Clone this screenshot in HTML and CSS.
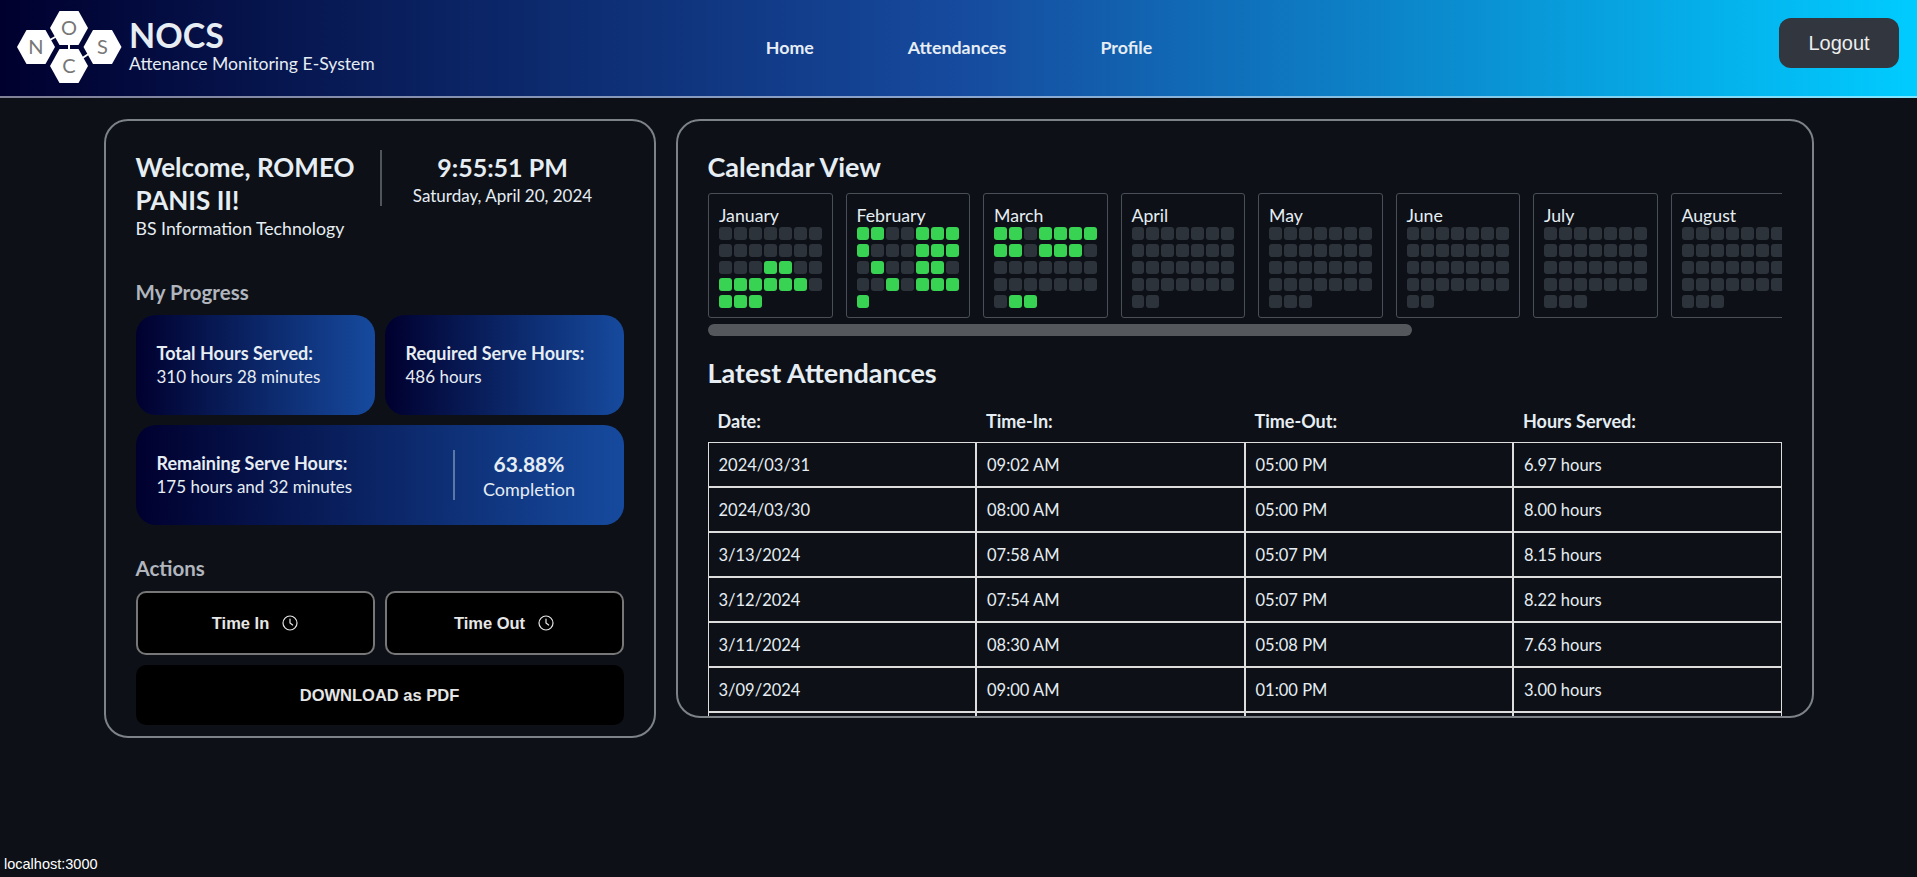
FILE: index.html
```html
<!DOCTYPE html>
<html lang="en">
<head>
    <meta charset="UTF-8">
    <title>NOCS</title>
    <link rel="stylesheet" href="styles.css">
</head>
<body>
    <header class="topbar">
        <div class="brand">
            <svg class="brand-logo" width="108" height="76" viewBox="16 10 108 76">
                <g stroke="#fff" stroke-width="2">
                    <line x1="48" y1="41" x2="57" y2="36"/>
                    <line x1="69" y1="44" x2="69" y2="50"/>
                    <line x1="81" y1="59" x2="90" y2="53"/>
                </g>
                <g fill="#fff">
                    <polygon points="17,47 26.5,30 45.5,30 55,47 45.5,64 26.5,64"/>
                    <polygon points="50,28 59.5,11 78.5,11 88,28 78.5,45 59.5,45"/>
                    <polygon points="83.5,47 93,30 112,30 121.5,47 112,64 93,64"/>
                    <polygon points="50,66 59.5,49 78.5,49 88,66 78.5,83 59.5,83"/>
                </g>
                <g class="logo-letters">
                    <text x="36" y="54">N</text>
                    <text x="69" y="35">O</text>
                    <text x="102.5" y="54">S</text>
                    <text x="69" y="73">C</text>
                </g>
            </svg>
            <div class="brand-text">
                <div class="brand-name">NOCS</div>
                <div class="brand-sub">Attenance Monitoring E-System</div>
            </div>
        </div>
        <nav class="nav">
            <a href="#">Home</a>
            <a href="#">Attendances</a>
            <a href="#">Profile</a>
        </nav>
        <div class="topbar-right">
            <button class="logout" type="button">Logout</button>
        </div>
    </header>

    <main class="page">
        <section class="card card-left">
            <div class="intro">
                <div class="intro-name">
                    <h1>Welcome, ROMEO PANIS II!</h1>
                    <p>BS Information Technology</p>
                </div>
                <div class="clock">
                    <div class="clock-time">9:55:51 PM</div>
                    <div class="clock-date">Saturday, April 20, 2024</div>
                </div>
            </div>

            <h3 class="section-title progress-title">My Progress</h3>
            <div class="stats">
                <div class="stat">
                    <strong>Total Hours Served:</strong>
                    <span>310 hours 28 minutes</span>
                </div>
                <div class="stat">
                    <strong>Required Serve Hours:</strong>
                    <span>486 hours</span>
                </div>
                <div class="stat stat-wide">
                    <div>
                        <strong>Remaining Serve Hours:</strong>
                        <span>175 hours and 32 minutes</span>
                    </div>
                    <div class="stat-percent">
                        <b>63.88%</b>
                        <span>Completion</span>
                    </div>
                </div>
            </div>

            <h3 class="section-title actions-title">Actions</h3>
            <div class="actions">
                <button class="btn" type="button">Time In
                    <svg width="16" height="16" viewBox="0 0 24 24" fill="none" stroke="currentColor" stroke-width="1.8" stroke-linecap="round" stroke-linejoin="round"><circle cx="12" cy="12" r="10.5"/><polyline points="12 6 12 12 16 15"/></svg>
                </button>
                <button class="btn" type="button">Time Out
                    <svg width="16" height="16" viewBox="0 0 24 24" fill="none" stroke="currentColor" stroke-width="1.8" stroke-linecap="round" stroke-linejoin="round"><circle cx="12" cy="12" r="10.5"/><polyline points="12 6 12 12 16 15"/></svg>
                </button>
                <button class="btn btn-pdf" type="button">DOWNLOAD as PDF</button>
            </div>
        </section>

        <section class="card card-right">
            <h2>Calendar View</h2>
            <div class="months" id="months"></div>
            <div class="months-thumb"></div>

            <h2 class="latest-title">Latest Attendances</h2>
            <div class="table-wrap">
                <table>
                    <thead>
                        <tr><th>Date:</th><th>Time-In:</th><th>Time-Out:</th><th>Hours Served:</th></tr>
                    </thead>
                    <tbody>
                        <tr><td>2024/03/31</td><td>09:02 AM</td><td>05:00 PM</td><td>6.97 hours</td></tr>
                        <tr><td>2024/03/30</td><td>08:00 AM</td><td>05:00 PM</td><td>8.00 hours</td></tr>
                        <tr><td>3/13/2024</td><td>07:58 AM</td><td>05:07 PM</td><td>8.15 hours</td></tr>
                        <tr><td>3/12/2024</td><td>07:54 AM</td><td>05:07 PM</td><td>8.22 hours</td></tr>
                        <tr><td>3/11/2024</td><td>08:30 AM</td><td>05:08 PM</td><td>7.63 hours</td></tr>
                        <tr><td>3/09/2024</td><td>09:00 AM</td><td>01:00 PM</td><td>3.00 hours</td></tr>
                        <tr><td>&nbsp;</td><td>&nbsp;</td><td>&nbsp;</td><td>&nbsp;</td></tr>
                    </tbody>
                </table>
            </div>
        </section>
    </main>

    <div class="status">localhost:3000</div>

    <script src="calendar.js"></script>
</body>
</html>
```

FILE: styles.css
```css
* {
    margin: 0;
    padding: 0;
    box-sizing: border-box;
}

body {
    font-family: 'Lato', 'Noto Sans', sans-serif;
    background-color: #0d1117;
    color: #e6edf3;
    height: 877px;
    overflow: hidden;
}

/* Top bar */
.topbar {
    height: 98px;
    display: grid;
    grid-template-columns: 1fr auto 1fr;
    align-items: center;
    padding: 0 18px 0 16px;
    background: linear-gradient(90deg, #00002e 0%, #164a9e 50%, #00ccff 100%);
    border-bottom: 2px solid rgba(255, 255, 255, 0.5);
}

.brand {
    display: flex;
    align-items: center;
    gap: 5px;
}

.brand-logo {
    display: block;
}

.logo-letters text {
    fill: #777;
    font-family: 'Lato', sans-serif;
    font-size: 20px;
    text-anchor: middle;
}

.brand-text {
    padding-bottom: 5px;
}

.brand-name {
    font-size: 34px;
    font-weight: 700;
    line-height: 34px;
    color: #e6edf3;
}

.brand-sub {
    margin-top: 2px;
    font-size: 17.6px;
    line-height: 20px;
    color: #e6edf3;
}

.nav {
    display: flex;
    gap: 94px;
    margin-bottom: 2px;
    margin-left: 3px;
}

.nav a {
    color: #e6edf3;
    font-size: 17.8px;
    font-weight: 700;
    text-decoration: none;
}

.topbar-right {
    display: flex;
    justify-content: flex-end;
}

.logout {
    width: 120px;
    height: 50px;
    margin-bottom: 10px;
    border: none;
    border-radius: 12px;
    background-color: #31363f;
    color: #eee;
    font-family: 'Liberation Sans', sans-serif;
    font-size: 20px;
}

/* Main layout */
.page {
    width: 1710px;
    margin: 21px auto 0;
    display: flex;
    align-items: flex-start;
    gap: 20px;
}

.card {
    border: 2px solid #7d8188;
    border-radius: 24px;
}

.card-left {
    width: 552px;
    height: 619px;
    flex-shrink: 0;
    padding: 30px 30px 10px;
}

.card-right {
    flex: 1;
    min-width: 0;
    height: 599px;
    padding: 30px 30px 0;
    overflow: hidden;
    display: flex;
    flex-direction: column;
}

/* Welcome block */
.intro {
    display: flex;
}

.intro-name {
    width: 244px;
    padding-right: 10px;
}

.intro h1 {
    font-size: 26px;
    line-height: 33px;
    font-weight: 700;
}

.intro p {
    font-size: 17.7px;
    line-height: 23px;
}

.clock {
    flex: 1;
    height: 56px;
    margin-top: -1px;
    padding-top: 1px;
    border-left: 2px solid #50545b;
    text-align: center;
}

.clock-time {
    font-size: 25px;
    line-height: 33px;
    font-weight: 700;
}

.clock-date {
    font-size: 17px;
    line-height: 24px;
}

.section-title {
    font-size: 20.5px;
    line-height: 24px;
    font-weight: 700;
    color: #b1b5be;
}

.progress-title {
    margin-top: 40px;
    margin-bottom: 11px;
}

.actions-title {
    margin-top: 31px;
    margin-bottom: 11px;
}

/* Progress cards */
.stats {
    display: grid;
    grid-template-columns: 1fr 1fr;
    gap: 10px;
}

.stat {
    height: 100px;
    padding: 0 20px 0 21px;
    border-radius: 20px;
    background: linear-gradient(90deg, #00002e 0%, #164a9e 100%);
    display: flex;
    flex-direction: column;
    justify-content: center;
    font-size: 17px;
    line-height: 23px;
}

.stat strong,
.stat span {
    display: block;
}

.stat strong {
    font-size: 18px;
}

.stat-wide {
    grid-column: 1 / 3;
    flex-direction: row;
    justify-content: space-between;
    align-items: center;
}

.stat-percent {
    width: 151px;
    height: 50px;
    border-left: 2px solid #5b76a8;
    text-align: center;
}

.stat-percent b {
    display: block;
    font-size: 21px;
    font-weight: 700;
    line-height: 28px;
}

.stat-percent span {
    font-size: 18px;
}

/* Buttons */
.actions {
    display: grid;
    grid-template-columns: 1fr 1fr;
    gap: 10px;
}

.btn {
    height: 64px;
    display: flex;
    align-items: center;
    justify-content: center;
    gap: 13px;
    background-color: #000;
    border: 2px solid #777;
    border-radius: 10px;
    color: #e6e6e6;
    font-family: 'Liberation Sans', sans-serif;
    font-size: 16.5px;
    font-weight: 700;
}

.btn-pdf {
    grid-column: 1 / 3;
    height: 60px;
    border: none;
}

/* Calendar */
.card-right h2 {
    font-size: 27px;
    line-height: 32px;
    font-weight: 700;
}

.months {
    display: flex;
    gap: 13px;
    margin-top: 10px;
    margin-left: 0.5px;
    overflow: hidden;
    flex-shrink: 0;
}

.months-thumb {
    width: 704px;
    height: 12px;
    flex-shrink: 0;
    margin-top: 6px;
    background-color: #54575b;
    border-radius: 6px;
}

.month {
    flex: 0 0 124.5px;
    height: 125px;
    padding: 10px;
    border: 1px solid #4a4f57;
    border-radius: 3px;
}

.month-name {
    font-size: 17.7px;
    line-height: 23px;
}

.month-days {
    display: grid;
    grid-template-columns: repeat(7, 1fr);
    gap: 4px 2px;
}

.day {
    height: 13px;
    border-radius: 3px;
    background-color: #2d333b;
}

.day.on {
    background-color: #39d353;
}

/* Attendance table */
.card-right .latest-title {
    margin-top: 21px;
    flex-shrink: 0;
}

.table-wrap {
    flex: 1;
    min-height: 0;
    overflow: hidden;
    margin-top: 11px;
}

table {
    width: 100%;
    table-layout: fixed;
    border-collapse: separate;
    border-spacing: 0;
    font-size: 16.5px;
}

th {
    height: 42px;
    padding: 0 10px;
    text-align: left;
    font-size: 18px;
    font-weight: 700;
}

td {
    height: 45px;
    padding: 0 10px;
    border: 1px solid #ddd;
}

.status {
    position: absolute;
    left: 0;
    bottom: 0;
    padding: 0 4px 5px;
    font-family: 'Liberation Sans', sans-serif;
    font-size: 14.5px;
    line-height: 16px;
    color: #fff;
}
```

FILE: calendar.js
```js
// days present in each month, 1 = attended
const months = [
    ["January", "0000000" + "0000000" + "0001100" + "1111110" + "111"],
    ["February", "1100111" + "1000111" + "0100110" + "0010111" + "1"],
    ["March", "1101111" + "1101110" + "0000000" + "0000000" + "011"],
    ["April", "0".repeat(30)],
    ["May", "0".repeat(31)],
    ["June", "0".repeat(30)],
    ["July", "0".repeat(31)],
    ["August", "0".repeat(31)]
];

const holder = document.getElementById("months");

months.forEach(function ([name, days]) {
    const month = document.createElement("div");
    month.className = "month";
    let cells = "";
    for (const d of days) {
        cells += '<div class="day' + (d === "1" ? " on" : "") + '"></div>';
    }
    month.innerHTML = '<div class="month-name">' + name + '</div><div class="month-days">' + cells + "</div>";
    holder.appendChild(month);
});
```
